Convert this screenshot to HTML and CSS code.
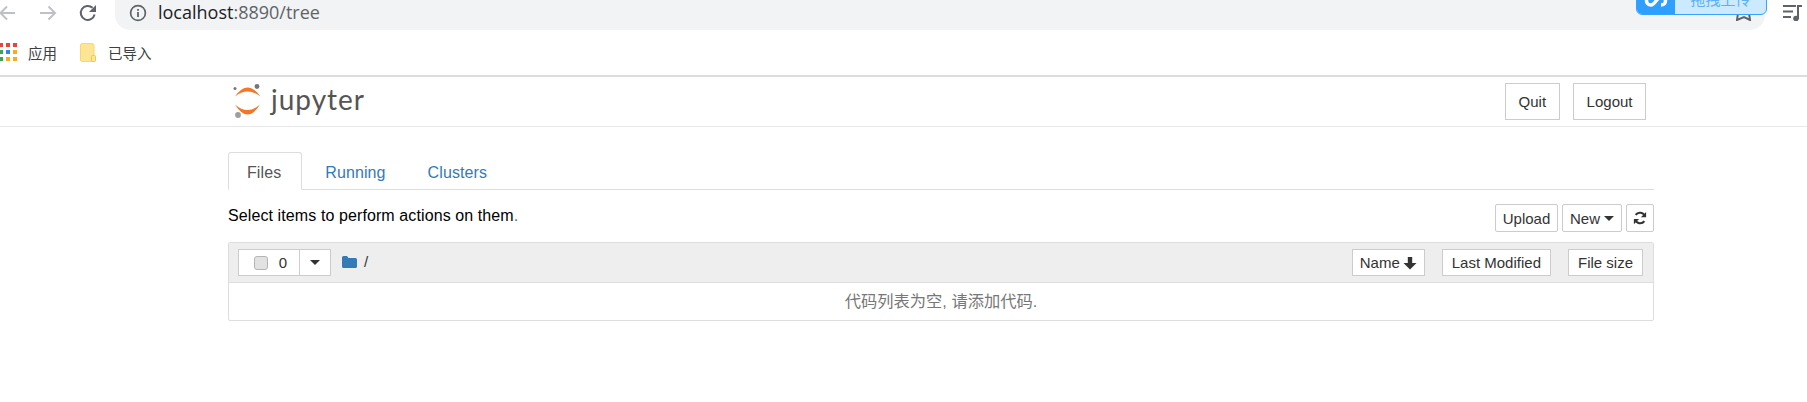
FILE: index.html
```html
<!DOCTYPE html>
<html lang="zh">
<head>
<meta charset="utf-8">
<title>Jupyter</title>
<link rel="stylesheet" href="styles.css">
</head>
<body>
<div class="toolbar">
  <svg class="nav-icon back" viewBox="0 0 20 20" width="20" height="20"><path d="M17 10H2.500M9 3.500 2.500 10 9 16.500" fill="none" stroke="#bfc1c4" stroke-width="2"/></svg>
  <svg class="nav-icon forward" viewBox="0 0 20 20" width="20" height="20"><path d="M2 10h15M10.500 3.500 17 10l-6.500 6.500" fill="none" stroke="#bfc1c4" stroke-width="2"/></svg>
  <svg class="nav-icon reload" viewBox="0 0 20 20" width="20" height="20"><path d="M16.600 11.500A7 7 0 1 1 14.600 4.800" fill="none" stroke="#5f6368" stroke-width="2"/><path d="M18 2v7h-7z" fill="#5f6368"/></svg>
  <div class="omnibox">
    <svg class="info" viewBox="0 0 18 18" width="18" height="18"><circle cx="9" cy="9" r="7.400" fill="none" stroke="#5f6368" stroke-width="1.700"/><rect x="8.100" y="8" width="1.800" height="5" fill="#5f6368"/><rect x="8.100" y="5" width="1.800" height="1.800" fill="#5f6368"/></svg>
    <span class="url"><span class="host">localhost</span>:8890/tree</span>
    <svg class="star" viewBox="0 0 16 8" width="16" height="8"><path d="M2 0 1 7l7-3 6 3-1-7" fill="none" stroke="#5f6368" stroke-width="2"/></svg>
  </div>
  <svg class="media" viewBox="0 0 20 16" width="20" height="16"><path d="M0 1h13M0 6.500h10M0 12h8" stroke="#5f6368" stroke-width="2" fill="none"/><path d="M15 14V1h4" stroke="#5f6368" stroke-width="2" fill="none"/><circle cx="13" cy="13.500" r="2.800" fill="#5f6368"/></svg>
</div>
<div class="upload-widget">
  <span class="widget-logo"><svg viewBox="0 0 28 12" width="28" height="12"><path d="M9 1.500C3 1.500 3 10 9 10c4 0 6-8 10-8 6 0 6 8 0 8" fill="none" stroke="#fff" stroke-width="3.500"/></svg></span>
  <span class="widget-text">拖拽上传</span>
</div>
<div class="bookmarks">
  <div class="bookmark apps">
    <span class="apps-grid">
      <i class="dot red"></i><i class="dot red"></i><i class="dot red"></i>
      <i class="dot green"></i><i class="dot blue"></i><i class="dot orange"></i>
      <i class="dot green"></i><i class="dot orange"></i><i class="dot orange"></i>
    </span>
    <span>应用</span>
  </div>
  <div class="bookmark imported">
    <svg viewBox="0 0 16 19" width="16" height="19"><path d="M2 .5h10a2 2 0 0 1 2 2V18.500H2a1.500 1.500 0 0 1-1.500-1.500V2A1.500 1.500 0 0 1 2 .5z" fill="#fde693" stroke="#f6d96d"/><rect x="11.500" y="12.500" width="4" height="6" rx="1" fill="#fde693" stroke="#eec94c"/></svg>
    <span>已导入</span>
  </div>
</div>
<header class="site-header">
  <div class="logo">
    <svg viewBox="0 0 34 36" width="34" height="36">
      <path d="M3 14.500Q15.500 -3.500 28.500 14.500 15.500 4.500 3 14.500z" fill="#f37726"/>
      <path d="M3 22.500Q15.500 42.500 28 22.500 15.500 33.500 3 22.500z" fill="#f37726"/>
      <circle cx="25" cy="4.500" r="2.400" fill="#767677"/>
      <circle cx="3" cy="6.500" r="1.500" fill="#767677"/>
      <circle cx="6" cy="33" r="2.900" fill="#9e9e9e"/>
    </svg>
    <span class="wordmark">jupyter</span>
  </div>
  <div class="header-buttons">
    <a class="btn header-btn">Quit</a>
    <a class="btn header-btn logout">Logout</a>
  </div>
</header>
<main class="page">
  <nav class="tabs">
    <a class="tab active">Files</a>
    <a class="tab">Running</a>
    <a class="tab">Clusters</a>
  </nav>
  <div class="actions">
    <p class="hint">Select items to perform actions on them<span class="period">.</span></p>
    <div class="action-buttons">
      <a class="btn small upload">Upload</a>
      <a class="btn small new">New <i class="caret"></i></a>
      <a class="btn small refresh"><svg viewBox="0 0 16 16" width="14" height="14"><path d="M13.500 6A6 6 0 0 0 3 4.500M2.500 10A6 6 0 0 0 13 11.500" fill="none" stroke="#333" stroke-width="2.400"/><path d="M15 1v6H9zM1 15V9h6z" fill="#333"/></svg></a>
    </div>
  </div>
  <section class="list">
    <div class="list-header">
      <div class="select-group">
        <label class="select-main"><span class="checkbox"></span><span>0</span></label>
        <span class="select-drop"><i class="caret"></i></span>
      </div>
      <svg class="folder" viewBox="0 0 15 12" width="15" height="12"><path d="M0 1.500A1.500 1.500 0 0 1 1.500 0h3.500l1.500 2h7A1.500 1.500 0 0 1 15 3.500V10.500A1.500 1.500 0 0 1 13.500 12h-12A1.500 1.500 0 0 1 0 10.500z" fill="#337ab7"/></svg>
      <span class="crumb">/</span>
      <div class="sort-buttons">
        <a class="btn sort name">Name <svg viewBox="0 0 14 14" width="14" height="14"><path d="M4.800 1h4.400v6H13.500L7 13.500 .5 7h4.300z" fill="#333"/></svg></a>
        <a class="btn sort">Last Modified</a>
        <a class="btn sort">File size</a>
      </div>
    </div>
    <div class="list-empty">代码列表为空, 请添加代码.</div>
  </section>
</main>
</body>
</html>
```
FILE: styles.css
```css
* { box-sizing: border-box; }
html, body { margin: 0; padding: 0; }
body {
  width: 1807px;
  height: 402px;
  overflow: hidden;
  position: relative;
  background: #fff;
  color: #000;
  font-family: "Liberation Sans", "Noto Sans CJK SC", sans-serif;
  font-size: 15px;
}
.toolbar {
  height: 30px;
  display: flex;
  align-items: center;
  position: relative;
}
.nav-icon { flex: none; margin-top: -4px; }
.back { margin-left: -2px; }
.forward { margin-left: 20px; }
.reload { margin-left: 20px; }
.omnibox {
  width: 1650px;
  height: 30px;
  margin-left: 17px;
  padding-left: 14px;
  background: #f1f3f4;
  border-radius: 0 0 15px 15px;
  display: flex;
  align-items: center;
  position: relative;
}
.info { margin-top: -5px; }
.url {
  margin-left: 11px;
  margin-top: -7px;
  font-family: "Open Sans", sans-serif;
  font-size: 18px;
  color: #5f6368;
  white-space: nowrap;
}
.host { color: #202124; }
.star { position: absolute; left: 1621px; top: 13px; }
.media { margin-left: 18px; margin-top: -4px; flex: none; }
.upload-widget {
  position: absolute;
  left: 1636px;
  top: -14px;
  width: 131px;
  height: 29px;
  display: flex;
  border: 1px solid #36a3ff;
  border-radius: 0 0 6px 6px;
  overflow: hidden;
  background: #cbeaff;
}
.widget-logo {
  width: 38px;
  background: #2e9eff;
  display: flex;
  align-items: flex-end;
  justify-content: center;
  padding-bottom: 7px;
}
.widget-text {
  flex: 1;
  text-align: center;
  font-size: 15px;
  line-height: 29px;
  margin-top: -2px;
  color: #5ab1f5;
}
.bookmarks {
  height: 47px;
  border-bottom: 2px solid #dcdce0;
  display: flex;
  align-items: center;
  color: #3c4043;
  font-size: 14.500px;
  font-family: "Noto Sans CJK SC", sans-serif;
}
.bookmark { display: flex; align-items: center; }
.apps { margin-left: 0; margin-top: -1px; }
.apps-grid {
  display: grid;
  grid-template-columns: repeat(3, 4px);
  grid-auto-rows: 4px;
  gap: 3px;
  margin-left: -1px;
  margin-right: 13px;
  width: 16px;
}
.dot { display: block; }
.red { background: #ef4136; }
.green { background: #34a853; }
.blue { background: #2b86ee; }
.orange { background: #fbab13; }
.imported { margin-left: 23px; margin-top: -1px; }
.imported svg { margin-right: 12px; }
.site-header {
  height: 50px;
  border-bottom: 1px solid #e7e7e7;
  padding: 0 161px 0 232px;
  display: flex;
  align-items: center;
  justify-content: space-between;
}
.logo { display: flex; align-items: center; margin-top: -3px; }
.wordmark {
  margin-left: 5px;
  font-family: "Lato", sans-serif;
  font-size: 28px;
  line-height: 36px;
  letter-spacing: 1px;
  color: #555;
  margin-top: -2px;
}
.header-buttons { display: flex; gap: 13px; margin-top: -1px; }
.btn {
  display: flex;
  align-items: center;
  justify-content: center;
  background: #fff;
  border: 1px solid #ccc;
  color: #333;
  white-space: nowrap;
}
.header-btn { height: 37px; padding: 0 13px; font-size: 15px; }
.logout { padding: 0 12.500px; }
.page {
  width: 1426px;
  margin-left: 228px;
}
.tabs {
  margin-top: 25px;
  height: 38px;
  display: flex;
  border-bottom: 1px solid #ddd;
}
.tab {
  height: 38px;
  padding: 0 18px;
  margin-right: 4px;
  line-height: 40px;
  font-size: 16px;
  letter-spacing: 0.100px;
  color: #337ab7;
  border: 1px solid transparent;
  border-radius: 3px 3px 0 0;
}
.tab.active {
  color: #555;
  background: #fff;
  border-color: #ddd #ddd #fff;
  padding-right: 20px;
}
.actions {
  display: flex;
  justify-content: space-between;
  align-items: flex-start;
  height: 52px;
  padding-top: 15px;
}
.hint { margin: 1px 0 0; line-height: 20px; font-size: 16px; letter-spacing: 0.100px; }
.period { color: #337ab7; }
.action-buttons { display: flex; gap: 4px; margin-top: -1px; margin-left: auto; }
.small { height: 28px; font-size: 15px; border-radius: 2px; }
.upload { width: 63px; }
.new { width: 60px; }
.refresh { width: 28px; }
.caret {
  display: inline-block;
  border-left: 5px solid transparent;
  border-right: 5px solid transparent;
  border-top: 5px solid #333;
  margin-left: 4px;
  vertical-align: middle;
}
.list {
  height: 79px;
  border: 1px solid #ddd;
  border-radius: 2px;
}
.list-header {
  height: 40px;
  background: #eee;
  border-bottom: 1px solid #ddd;
  display: flex;
  align-items: center;
  padding-left: 9px;
}
.select-group { display: flex; height: 27px; }
.select-main {
  width: 62px;
  background: #fff;
  border: 1px solid #ccc;
  display: flex;
  align-items: center;
  justify-content: flex-end;
  gap: 11px;
  padding-right: 12px;
  font-size: 15px;
  color: #333;
}
.checkbox {
  width: 14px;
  height: 14px;
  border-radius: 3px;
  background: #e2e2e2;
  border: 1px solid #b5b5b5;
}
.select-drop {
  width: 31px;
  background: #fff;
  border: 1px solid #ccc;
  border-left: 0;
  display: flex;
  align-items: center;
  justify-content: center;
}
.select-drop .caret { margin-left: 0; }
.folder { margin-left: 11px; margin-top: -2px; flex: none; }
.crumb { margin-left: 7px; margin-top: -2px; color: #333; font-size: 15px; }
.sort-buttons { display: flex; gap: 17px; margin-left: auto; margin-right: 10px; }
.sort { height: 27px; padding: 0 9px; font-size: 15px; gap: 4px; }
.sort.name { padding: 0 7px; gap: 3px; }
.list-empty {
  height: 37px;
  text-align: center;
  line-height: 37px;
  font-size: 16.300px;
  color: #777;
}
```
